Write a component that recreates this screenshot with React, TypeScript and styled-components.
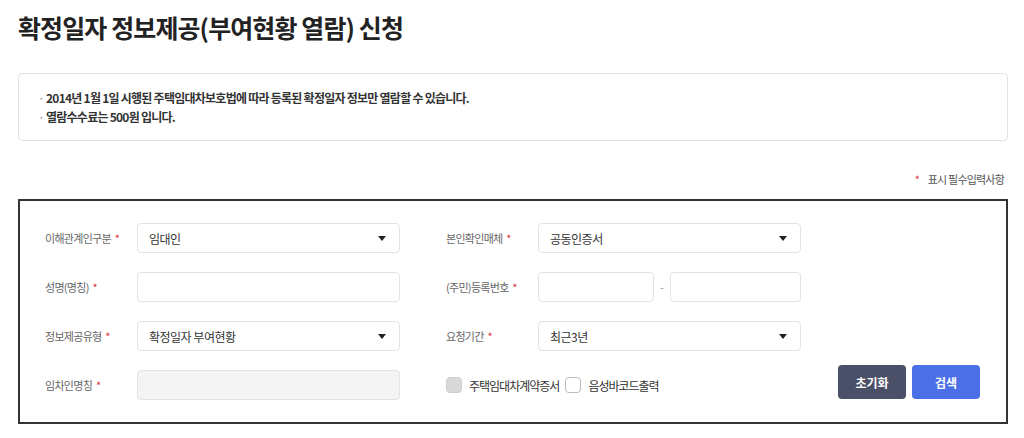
import styled, { createGlobalStyle } from "styled-components";

const GlobalStyle = createGlobalStyle`
    body {
        margin: 0;
        background: #ffffff;
        font-family: "Noto Sans CJK KR", "Noto Sans", sans-serif;
        color: #333333;
    }
`

const Page = styled.div`
    width: 990px;
    margin-left: 18px;
    padding-top: 10px;
`

const Title = styled.h1`
    margin: 0;
    font-size: 25px;
    line-height: 34px;
    font-weight: 700;
    color: #222222;
    letter-spacing: -0.9px;
`

const Notice = styled.ul`
    margin: 29px 0 0;
    padding: 14px 0 14px 19px;
    list-style: none;
    border: 1px solid #e2e2e2;
    border-radius: 4px;

    li {
        font-size: 12px;
        line-height: 19px;
        font-weight: 700;
        color: #333333;
        letter-spacing: -0.75px;
    }

    li::before {
        content: "·";
        display: inline-block;
        width: 8px;
        color: #888888;
        font-weight: 400;
    }
`

const RequiredNote = styled.p`
    margin: 30px 0 0;
    padding-right: 4px;
    text-align: right;
    font-size: 11px;
    line-height: 16px;
    color: #555555;
    letter-spacing: -0.8px;
`

const Star = styled.span<{ $tight?: boolean }>`
    color: #d9343b;
    margin: ${(p) => (p.$tight ? "0 0 0 2px" : "0 8px 0 0")};
    letter-spacing: 0;
`

const FormBox = styled.div`
    margin-top: 12px;
    border: 2px solid #333333;
    padding: 22px 0 22px 25px;
    display: flex;
`

const Fields = styled.div`
    display: grid;
    grid-template-columns: repeat(2, 355px);
    column-gap: 46px;
    row-gap: 19px;
`

const Field = styled.div`
    display: flex;
    align-items: center;
    height: 30px;
`

const Label = styled.label`
    width: 92px;
    flex-shrink: 0;
    font-size: 11px;
    color: #666666;
    letter-spacing: -0.7px;
`

const Control = styled.div<{ $disabled?: boolean }>`
    box-sizing: border-box;
    flex: 1;
    height: 30px;
    border: 1px solid #e3e3e3;
    border-radius: 4px;
    background: ${(p) => (p.$disabled ? "#f4f4f4" : "#ffffff")};
    display: flex;
    align-items: center;
    justify-content: space-between;
    padding: 0 11px;
    font-size: 12px;
    color: #333333;
    letter-spacing: -0.5px;
`

const Arrow = styled.span`
    width: 0;
    height: 0;
    border-left: 4px solid transparent;
    border-right: 4px solid transparent;
    border-top: 5px solid #222222;
    margin-right: 2px;
`

const SplitInput = styled.div`
    flex: 1;
    display: flex;
    align-items: center;
`

const Dash = styled.span`
    width: 16px;
    text-align: center;
    font-size: 11px;
    color: #999999;
`

const Checks = styled.div`
    display: flex;
    align-items: center;
    height: 30px;
    gap: 6px;
`

const CheckLabel = styled.label`
    display: flex;
    align-items: center;
    gap: 7px;
    font-size: 12px;
    color: #333333;
    letter-spacing: -1px;
`

const Box = styled.span<{ $checked?: boolean }>`
    box-sizing: border-box;
    width: 16px;
    height: 16px;
    border-radius: 4px;
    border: 1px solid ${(p) => (p.$checked ? "#cfcfcf" : "#bdbdbd")};
    background: ${(p) => (p.$checked ? "#d9d9d9" : "#ffffff")};
`

const Actions = styled.div`
    align-self: flex-end;
    display: flex;
    gap: 6px;
    margin-left: 37px;
    margin-bottom: 1px;
`

const Button = styled.button<{ $primary?: boolean }>`
    width: 68px;
    height: 34px;
    border: none;
    border-radius: 4px;
    background: ${(p) => (p.$primary ? "#4a6fe6" : "#4b5069")};
    color: #ffffff;
    font-family: inherit;
    font-size: 12px;
    font-weight: 700;
    cursor: pointer;
`

const Req = () => <Star $tight>*</Star>

const App = () => {
    return (
        <>
            <GlobalStyle />
            <Page>
                <Title>확정일자 정보제공(부여현황 열람) 신청</Title>
                <Notice>
                    <li>2014년 1월 1일 시행된 주택임대차보호법에 따라 등록된 확정일자 정보만 열람할 수 있습니다.</li>
                    <li>열람수수료는 500원 입니다.</li>
                </Notice>
                <RequiredNote>
                    <Star>*</Star>표시 필수입력사항
                </RequiredNote>
                <FormBox>
                    <Fields>
                        <Field>
                            <Label>이해관계인구분 <Req /></Label>
                            <Control>임대인<Arrow /></Control>
                        </Field>
                        <Field>
                            <Label>본인확인매체 <Req /></Label>
                            <Control>공동인증서<Arrow /></Control>
                        </Field>
                        <Field>
                            <Label>성명(명칭) <Req /></Label>
                            <Control />
                        </Field>
                        <Field>
                            <Label>(주민)등록번호 <Req /></Label>
                            <SplitInput>
                                <Control style={{ flex: "0 0 116px" }} />
                                <Dash>-</Dash>
                                <Control />
                            </SplitInput>
                        </Field>
                        <Field>
                            <Label>정보제공유형 <Req /></Label>
                            <Control>확정일자 부여현황<Arrow /></Control>
                        </Field>
                        <Field>
                            <Label>요청기간 <Req /></Label>
                            <Control>최근3년<Arrow /></Control>
                        </Field>
                        <Field>
                            <Label>임차인명칭 <Req /></Label>
                            <Control $disabled />
                        </Field>
                        <Checks>
                            <CheckLabel><Box $checked />주택임대차계약증서</CheckLabel>
                            <CheckLabel><Box />음성바코드출력</CheckLabel>
                        </Checks>
                    </Fields>
                    <Actions>
                        <Button>초기화</Button>
                        <Button $primary>검색</Button>
                    </Actions>
                </FormBox>
            </Page>
        </>
    )
}

export default App
